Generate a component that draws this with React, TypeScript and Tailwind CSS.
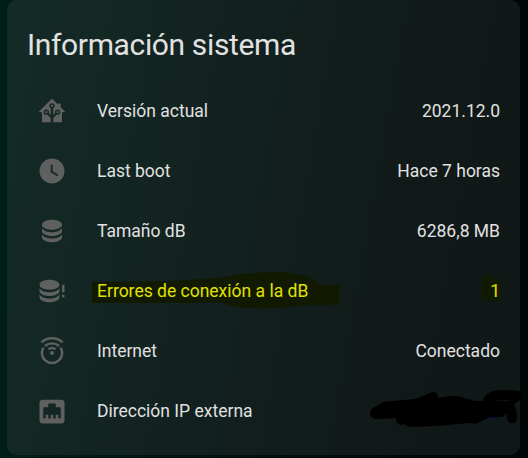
import React from "react";

const icons: Record<string, React.ReactNode> = {
  home: <path d="M21.8,13H20V21H13V17.67L15.79,14.88L16.5,15C17.66,15 18.6,14.06 18.6,12.9C18.6,11.74 17.66,10.8 16.5,10.8A2.1,2.1 0 0,0 14.4,12.9L14.5,13.61L13,15.13V9.65C13.66,9.29 14.1,8.6 14.1,7.8A2.1,2.1 0 0,0 12,5.7A2.1,2.1 0 0,0 9.9,7.8C9.9,8.6 10.34,9.29 11,9.65V15.13L9.5,13.61L9.6,12.9A2.1,2.1 0 0,0 7.5,10.8A2.1,2.1 0 0,0 5.4,12.9A2.1,2.1 0 0,0 7.5,15L8.21,14.88L11,17.67V21H4V13H2.25C1.83,13 1.42,13 1.42,12.79C1.43,12.57 1.85,12.15 2.28,11.72L11,3C11.33,2.67 11.67,2.33 12,2.33C12.33,2.33 12.67,2.67 13,3L17,7V6H19V9L21.78,11.78C22.18,12.18 22.59,12.59 22.6,12.8C22.6,13 22.2,13 21.8,13M7.5,12A0.9,0.9 0 0,1 8.4,12.9A0.9,0.9 0 0,1 7.5,13.8A0.9,0.9 0 0,1 6.6,12.9A0.9,0.9 0 0,1 7.5,12M16.5,12C17,12 17.4,12.4 17.4,12.9C17.4,13.4 17,13.8 16.5,13.8A0.9,0.9 0 0,1 15.6,12.9A0.9,0.9 0 0,1 16.5,12M12,6.9C12.5,6.9 12.9,7.3 12.9,7.8C12.9,8.3 12.5,8.7 12,8.7C11.5,8.7 11.1,8.3 11.1,7.8C11.1,7.3 11.5,6.9 12,6.9Z" />,
  clock: <path d="M12,2A10,10 0 0,0 2,12A10,10 0 0,0 12,22A10,10 0 0,0 22,12A10,10 0 0,0 12,2M16.2,16.2L11,13V7H12.5V12.2L17,14.9L16.2,16.2Z" />,
  database: <path d="M12,3C7.58,3 4,4.79 4,7C4,9.21 7.58,11 12,11C16.42,11 20,9.21 20,7C20,4.79 16.42,3 12,3M4,9V12C4,14.21 7.58,16 12,16C16.42,16 20,14.21 20,12V9C20,11.21 16.42,13 12,13C7.58,13 4,11.21 4,9M4,14V17C4,19.21 7.58,21 12,21C16.42,21 20,19.21 20,17V14C20,16.21 16.42,18 12,18C7.58,18 4,16.21 4,14Z" />,
  databaseAlert: <path d="M10,3C5.58,3 2,4.79 2,7C2,9.21 5.58,11 10,11C14.42,11 18,9.21 18,7C18,4.79 14.42,3 10,3M2,9V12C2,14.21 5.58,16 10,16C14.42,16 18,14.21 18,12V9C18,11.21 14.42,13 10,13C5.58,13 2,11.21 2,9M2,14V17C2,19.21 5.58,21 10,21C14.42,21 18,19.21 18,17V14C18,16.21 14.42,18 10,18C5.58,18 2,16.21 2,14M20,7V13H22V7H20M20,15V17H22V15H20Z" />,
  internet: (
    <g fill="none" stroke="currentColor" strokeWidth="2">
      <path d="M3.5 5.1A12.8 12.8 0 0 1 20.5 5.1" />
      <path d="M6.3 8A8.8 8.8 0 0 1 17.7 8" strokeWidth="1.9" />
      <path d="M5.1 9.3A8.1 8.1 0 1 0 18.9 9.3" />
      <path d="M9.1 10.7A4.8 4.8 0 0 1 14.9 10.7" strokeWidth="1.8" />
      <circle cx="12" cy="13.6" r="1.6" fill="currentColor" stroke="none" />
    </g>
  ),
  ethernet: <path d="M7,15H9V18H11V15H13V18H15V15H17V18H19V9H15V6H9V9H5V18H7V15M4.38,3H19.63C20.94,3 22,4.06 22,5.38V19.63A2.37,2.37 0 0,1 19.63,22H4.38C3.06,22 2,20.94 2,19.63V5.38C2,4.06 3.06,3 4.38,3Z" />,
};

const rows = [
  { icon: "home", label: "Versión actual", value: "2021.12.0" },
  { icon: "clock", label: "Last boot", value: "Hace 7 horas" },
  { icon: "database", label: "Tamaño dB", value: "6286,8 MB" },
  { icon: "databaseAlert", label: "Errores de conexión a la dB", value: "1", marked: true },
  { icon: "internet", label: "Internet", value: "Conectado" },
  { icon: "ethernet", label: "Dirección IP externa", value: "" },
];

export default function App() {
  return (
    <main className="relative h-[458px] w-[528px] overflow-hidden bg-linear-to-r from-[#001e18] via-[#00100e] to-[#000605] pl-[7px] font-['Roboto',sans-serif] text-[#e1e1e1]">
      <section className="h-[455px] w-[513px] rounded-[10px] bg-[linear-gradient(100deg,#142b26_0%,#12211f_42%,#111a19_72%,#101817_100%)] pt-[21px] pr-5 pl-5">
        <h1 className="h-[60px] text-[30px] leading-[48px] font-normal tracking-[-0.36px] whitespace-nowrap">Información sistema</h1>
        {rows.map((row) => (
          <div key={row.label} className="flex h-[60px] items-center text-[17.5px] leading-6">
            <div className="flex w-[50px] shrink-0 justify-center text-[#5f6060]">
              <svg viewBox="0 0 24 24" className="size-[30px] overflow-visible fill-current">{icons[row.icon]}</svg>
            </div>
            <div className={row.marked ? "relative ml-5 flex-1 text-[#e1e100]" : "ml-5 flex-1"}>
              {row.marked && (
                <svg className="absolute -top-[7px] -left-[5px] h-[40px] w-[250px]" viewBox="0 0 250 40">
                  <path d="M0 10L75 9L128 6Q150 1 180 0Q212 0 224 9L226 13H247V33H225Q205 33 185 36Q150 38 130 31H0Z" fill="#111a00" />
                </svg>
              )}
              <span className="relative">{row.label}</span>
            </div>
            <div className={row.marked ? "relative text-[#e1e100]" : ""}>
              {row.marked && (
                <svg className="absolute -top-[6px] -left-[8px] h-[28px] w-[20px]" viewBox="0 0 20 28">
                  <path d="M0 5Q0 1 5 1Q9 1 10 6H19V26Q10 29 0 26Z" fill="#111a00" />
                </svg>
              )}
              <span className="relative">{row.value}</span>
            </div>
          </div>
        ))}
      </section>
      <svg className="absolute top-[385px] left-[365px] h-[45px] w-[160px]" viewBox="0 0 480 135">
        <path d="M366 99Q380 94 396 96" stroke="#00006e" strokeWidth="4" fill="none" />
        <path d="M15 85Q15 70 30 65L55 50L150 42L200 22Q218 18 219 38L255 34Q285 29 305 43Q318 41 326 47L353 48Q362 21 395 16L455 16Q475 20 470 35Q462 50 448 57L455 85Q459 112 443 115Q428 115 426 97L423 82Q420 96 408 96L372 97Q350 112 330 116L315 114L200 124L135 125Q124 125 122 118L105 120Q92 116 93 100L30 102Q15 98 15 85Z" />
        <path d="M388 47Q412 41 437 45L432 49Z" fill="#0b1110" />
      </svg>
    </main>
  );
}
